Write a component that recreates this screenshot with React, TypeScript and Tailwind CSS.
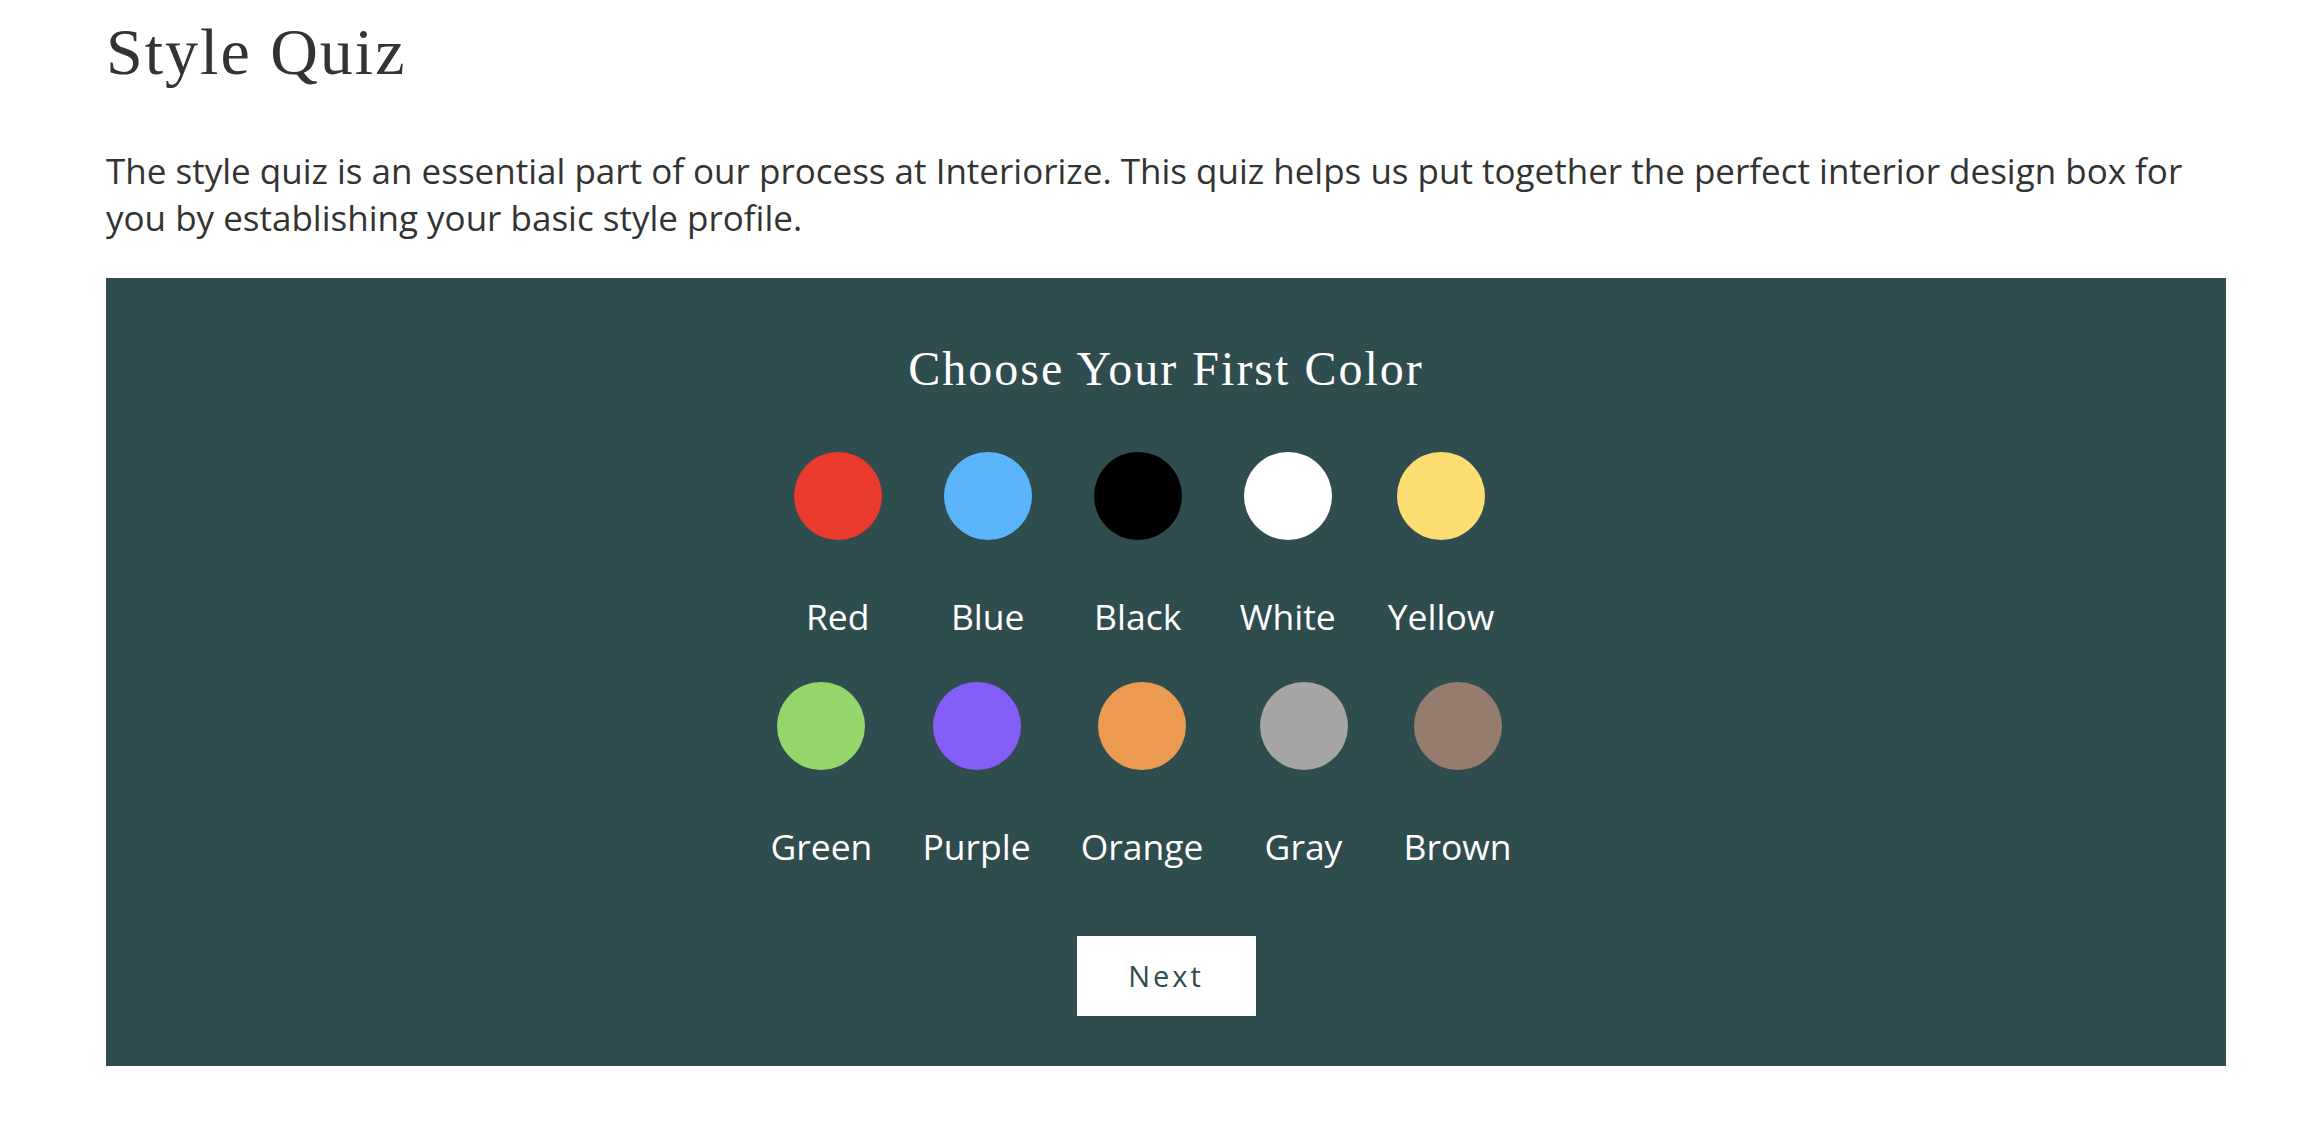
import React from "react";

type Swatch = {
  name: string;
  color: string;
};

const rowOne: Swatch[] = [
  { name: "Red", color: "bg-[#e93a2d]" },
  { name: "Blue", color: "bg-[#5bb4f9]" },
  { name: "Black", color: "bg-[#000000]" },
  { name: "White", color: "bg-[#ffffff]" },
  { name: "Yellow", color: "bg-[#fcdd72]" },
];

const rowTwo: Swatch[] = [
  { name: "Green", color: "bg-[#95d66c]" },
  { name: "Purple", color: "bg-[#845ef6]" },
  { name: "Orange", color: "bg-[#ec9a51]" },
  { name: "Gray", color: "bg-[#a5a5a5]" },
  { name: "Brown", color: "bg-[#967c6e]" },
];

const sans = "font-['Open_Sans','Noto_Sans',sans-serif]";
const serif = "font-['Liberation_Serif','DejaVu_Serif',serif]";

function SwatchRow({ items }: { items: Swatch[] }) {
  return (
    <div className="flex justify-center">
      {items.map((s) => (
        <button
          key={s.name}
          type="button"
          className="flex min-w-[100px] mr-[50px] flex-col items-center"
        >
          <span className={`block h-[88px] w-[88px] rounded-full ${s.color}`} />
          <span className={`${sans} mt-[53px] text-[35.5px] leading-[47px] text-white`}>
            {s.name}
          </span>
        </button>
      ))}
    </div>
  );
}

export default function App() {
  return (
    <div className="min-h-[1124px] w-full bg-white">
      <div className="ml-[106px] w-[2120px] pt-[12px]">
        {/* Header */}
        <h1 className={`${serif} text-[66px] leading-[80px] tracking-[2px] text-[#333333]`}>
          Style Quiz
        </h1>
        <p className={`${sans} mt-[55px] text-[35px] leading-[47px] text-[#333333]`}>
          The style quiz is an essential part of our process at Interiorize. This quiz helps us put
          together the perfect interior design box for you by establishing your basic style profile.
        </p>

        {/* Quiz panel */}
        <div className="mt-[37px] flex flex-col items-center bg-[#2f4c4e] pt-[62px] pb-[50px]">
          <h2 className={`${serif} text-[48px] leading-[58px] tracking-[2px] text-white`}>
            Choose Your First Color
          </h2>
          <div className="mt-[54px] flex flex-col gap-[42px]">
            <SwatchRow items={rowOne} />
            <SwatchRow items={rowTwo} />
          </div>
          <button
            type="button"
            className={`${sans} mt-[66px] h-[80px] w-[179px] bg-white text-[29px] tracking-[3px] text-[#2f4c4e]`}
          >
            Next
          </button>
        </div>
      </div>
    </div>
  );
}
